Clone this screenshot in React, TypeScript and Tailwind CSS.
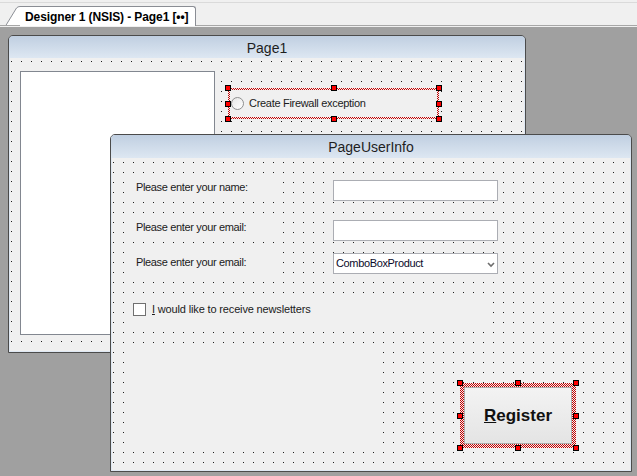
import type { ReactNode } from 'react';

const dots =
  'bg-[#f0f0f0] bg-[image:conic-gradient(from_270deg_at_1px_1px,#1e1e1e_90deg,transparent_0)] bg-[size:10px_10px]';

const checker =
  'bg-[#f6eeee] bg-[image:repeating-conic-gradient(#c00000_0_25%,transparent_0_50%)] bg-[size:2px_2px]';

function Handles() {
  const h = 'absolute w-[6px] h-[6px] bg-[#ff0000] border border-black z-10';
  return (
    <>
      <span className={`${h} -left-[3px] -top-[3px]`} />
      <span className={`${h} left-1/2 -translate-x-1/2 -top-[3px]`} />
      <span className={`${h} -right-[3px] -top-[3px]`} />
      <span className={`${h} -left-[3px] top-1/2 -translate-y-1/2`} />
      <span className={`${h} -right-[3px] top-1/2 -translate-y-1/2`} />
      <span className={`${h} -left-[3px] -bottom-[3px]`} />
      <span className={`${h} left-1/2 -translate-x-1/2 -bottom-[3px]`} />
      <span className={`${h} -right-[3px] -bottom-[3px]`} />
    </>
  );
}

// selected control on the design surface: dotted red band + grab handles
function Selected({ className, children }: { className: string; children: ReactNode }) {
  return (
    <div className={`absolute ${checker} ${className}`}>
      {children}
      <Handles />
    </div>
  );
}

function DesignWindow({
  title, className, headerClass, bodyClass, children,
}: { title: string; className: string; headerClass: string; bodyClass: string; children: ReactNode }) {
  return (
    <div className={`absolute flex flex-col border border-[#4b4b4b] rounded-t-[5px] overflow-hidden ${className}`}>
      <div className={`shrink-0 flex items-center justify-center pt-[2px] bg-linear-to-b from-[#c0cfe1] to-[#dde7f2] text-[14px] text-[#1e1e1e] ${headerClass}`}>
        {title}
      </div>
      <div className={`relative flex-1 ${dots} ${bodyClass} shadow-[inset_1px_0_0_#dfe8f3,inset_-1px_0_0_#dfe8f3,inset_0_-1px_0_#dfe8f3]`}>
        {children}
      </div>
    </div>
  );
}

function Label({ top, text }: { top: string; text: string }) {
  return (
    <div className={`absolute left-[17px] w-[152px] h-[24px] flex items-center pl-[8px] bg-[#f0f0f0] text-[11px] tracking-[-0.35px] text-[#1b1b1b] ${top}`}>
      {text}
    </div>
  );
}

export default function App() {
  return (
    <div className="w-[637px] h-[476px] flex flex-col overflow-hidden bg-[#a0a0a0] font-['Liberation_Sans',Arial,sans-serif]">
      {/* Document tab strip */}
      <div className="h-[25px] shrink-0 flex flex-col bg-[#f0f0f0]">
        <div className="mt-[2px] h-px bg-[#dadada]" />
        <div className="mt-[3px] h-[19px] flex pl-[5px]">
          <svg width="15" height="20" viewBox="0 0 15 20" className="shrink-0 -mb-px">
            <path d="M0 20 L11.5 2 Q12.8 0.5 15 0.5 L15 20 Z" fill="#ffffff" />
            <path d="M0.5 20 L11.5 2 Q12.8 0.5 15 0.5" fill="none" stroke="#8a8d94" />
          </svg>
          <div className="relative z-10 -mb-px h-[20px] flex items-center pl-[5px] pr-[7px] bg-white border-t border-r border-[#8a8d94] rounded-tr-[3px] text-[12px] font-bold tracking-[-0.1px] text-black">
            Designer 1 (NSIS) - Page1 [••]
          </div>
        </div>
      </div>
      <div className="h-px shrink-0 bg-[#a7a7a7]" />
      <div className="h-px shrink-0 bg-[#f0f0f0]" />

      {/* Design surface */}
      <div className="relative flex-1">
        <DesignWindow
          title="Page1"
          className="left-[8px] top-[8px] w-[518px] h-[318px]"
          headerClass="h-[22px]"
          bodyClass="bg-[position:2px_3px]"
        >
          <div className="absolute left-[11px] top-[13px] w-[195px] h-[264px] bg-white border border-[#828790]" />
          <Selected className="left-[219px] top-[30px] w-[211px] h-[31px] p-[2px]">
            <div className="h-full flex items-center gap-[5px] pl-px bg-[#f0f0f0]">
              <span className="w-[13px] h-[13px] rounded-full border border-[#8e8f8f] bg-linear-to-br from-[#e6e6e6] to-white" />
              <span className="text-[11px] tracking-[-0.3px] text-[#1b1b1b]">Create Firewall exception</span>
            </div>
          </Selected>
        </DesignWindow>

        <DesignWindow
          title="PageUserInfo"
          className="left-[110px] top-[107px] w-[522px] h-[338px]"
          headerClass="h-[23px]"
          bodyClass="bg-[position:2px_4px]"
        >
          <Label top="top-[17px]" text="Please enter your name:" />
          <Label top="top-[57px]" text="Please enter your email:" />
          <Label top="top-[92px]" text="Please enter your email:" />

          <div className="absolute left-[222px] top-[22px] w-[165px] h-[21px] bg-white border border-[#abadb3]" />
          <div className="absolute left-[222px] top-[62px] w-[165px] h-[21px] bg-white border border-[#abadb3]" />
          <div className="absolute left-[222px] top-[95px] w-[165px] h-[21px] flex items-center pl-[2px] bg-white border border-[#abadb3]">
            <span className="text-[11px] tracking-[-0.35px] text-[#0a0a2a]">ComboBoxProduct</span>
            <svg width="8" height="6" viewBox="0 0 8 6" className="absolute left-[153px] top-[8px]">
              <path d="M1 1 L4 4 L7 1" fill="none" stroke="#6d6d6d" strokeWidth="1.6" />
            </svg>
          </div>

          <div className="absolute left-[16px] top-[135px] w-[363px] h-[32px] flex items-center gap-[6px] pl-[6px] pt-px bg-[#f0f0f0]">
            <span className="w-[13px] h-[13px] bg-white border border-[#707070]" />
            <span className="text-[11px] tracking-[-0.15px] text-[#1b1b1b]">
              <span className="underline">I</span> would like to receive newsletters
            </span>
          </div>

          <div className="absolute left-[16px] top-[194px] w-[253px] h-[95px] bg-[#f0f0f0]" />

          <Selected className="left-[349px] top-[225px] w-[116px] h-[65px] p-[4px]">
            <div className="h-full flex items-center justify-center bg-linear-to-b from-[#f3f3f3] to-[#e4e4e4] border border-[#acacac] text-[17px] font-bold text-[#111]">
              <span><span className="underline">R</span>egister</span>
            </div>
          </Selected>
        </DesignWindow>
      </div>
    </div>
  );
}
